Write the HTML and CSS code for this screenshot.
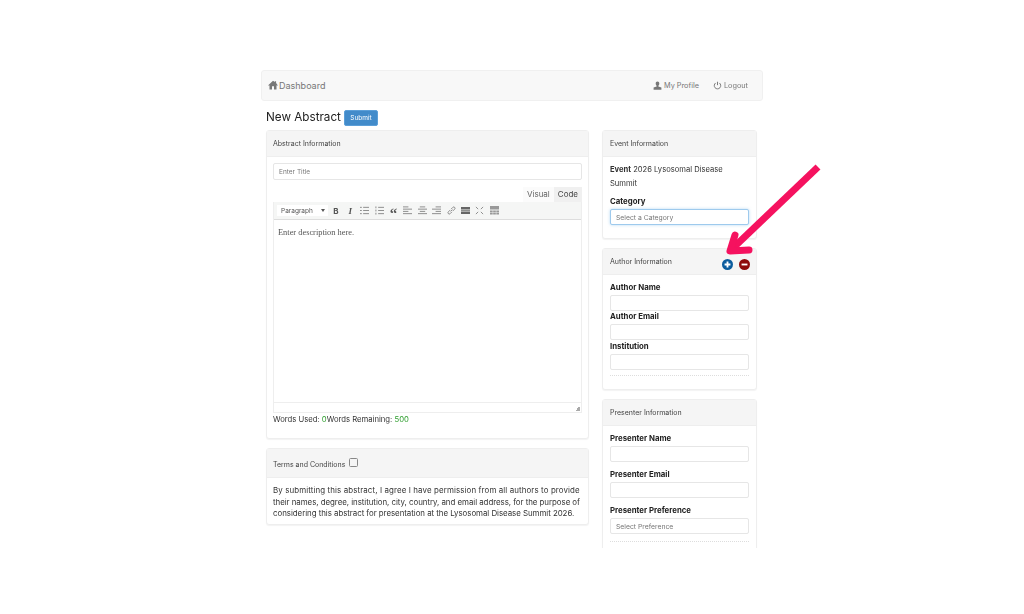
FILE: index.html
```html
<!DOCTYPE html>
<html lang="en">
<head>
  <meta charset="UTF-8" />
  <title>New Abstract</title>
  <link rel="stylesheet" href="styles.css">
</head>
<body>
  <div class="container">
    <nav class="navbar">
      <a class="nav-link nav-brand">
        <svg class="nav-icon" viewBox="0 0 12 12"><path d="M6 1 .3 6.300l.7.7.8-.7V11.500h3V7.600h2.400v3.900h3V6.300l.8.7.7-.7L9.700 3.700V1.500H8.200v.9z"/></svg>
        Dashboard
      </a>
      <div class="nav-right">
        <a class="nav-link">
          <svg class="nav-icon" viewBox="0 0 12 12"><path d="M6 .5C4.400.5 3.600 1.700 3.600 3.400c0 1.200.5 2.300 1.200 2.800v1L.8 8.800V11.500h10.400V8.800L7.200 7.200v-1c.7-.5 1.200-1.600 1.200-2.800C8.400 1.700 7.600.5 6 .5z"/></svg>
          My Profile
        </a>
        <a class="nav-link">
          <svg class="nav-icon" viewBox="0 0 12 12"><path class="line" d="M3.600 2.600a4.300 4.300 0 1 0 4.800 0M6 1v4.500"/></svg>
          Logout
        </a>
      </div>
    </nav>

    <div class="page-title">
      <h1>New Abstract</h1>
      <button class="btn-submit">Submit</button>
    </div>

    <div class="columns">
      <div class="col-left">
        <section class="panel">
          <div class="panel-head">Abstract Information</div>
          <div class="panel-body">
            <div class="input input-title">Enter Title</div>
            <div class="editor-tabs">
              <span class="tab tab-active">Visual</span>
              <span class="tab">Code</span>
            </div>
            <div class="editor">
              <div class="toolbar">
                <div class="format-select">Paragraph <span class="caret"></span></div>
                <span class="tool tool-b">B</span>
                <span class="tool tool-i">I</span>
                <svg class="tool-svg" viewBox="0 0 10 10"><path class="line" d="M3.500 1.500H10M3.500 5H10M3.500 8.500H10M0 1.500h2M0 5h2M0 8.500h2"/></svg>
                <svg class="tool-svg" viewBox="0 0 10 10"><path class="line" d="M3.500 1.500H10M3.500 5H10M3.500 8.500H10M1 .5v2M1 4v2M1 7.500v2"/></svg>
                <span class="tool tool-q">“</span>
                <svg class="tool-svg" viewBox="0 0 10 10"><path class="line" d="M0 1h6M0 3.500h10M0 6h6M0 8.500h10"/></svg>
                <svg class="tool-svg" viewBox="0 0 10 10"><path class="line" d="M2 1h6M0 3.500h10M2 6h6M0 8.500h10"/></svg>
                <svg class="tool-svg" viewBox="0 0 10 10"><path class="line" d="M4 1h6M0 3.500h10M4 6h6M0 8.500h10"/></svg>
                <svg class="tool-svg" viewBox="0 0 10 10"><path class="line" d="M4 6 6 4M3.500 4.500 1.500 6.500a1.400 1.400 0 0 0 2 2l2-2M6.500 5.500l2-2a1.400 1.400 0 0 0-2-2l-2 2"/></svg>
                <svg class="tool-svg" viewBox="0 0 10 10"><path d="M0 1h10v3H0zM0 6h10v3H0z"/><path class="line" d="M0 5h10"/></svg>
                <svg class="tool-svg" viewBox="0 0 10 10"><path class="line" d="M3.500 3.500 1 1M6.500 3.500 9 1M3.500 6.500 1 9M6.500 6.500 9 9"/></svg>
                <svg class="tool-svg tool-table" viewBox="0 0 10 10"><path d="M0 0h10v4H0zM0 5h3v2H0zM3.500 5h3v2h-3zM7 5h3v2H7zM0 7.500h3v2H0zM3.500 7.500h3v2h-3zM7 7.500h3v2H7z"/></svg>
              </div>
              <div class="editor-area">Enter description here.</div>
              <div class="statusbar"><span class="grip"></span></div>
            </div>
            <p class="word-count">Words Used: <span class="green">0</span>Words Remaining: <span class="green">500</span></p>
          </div>
        </section>

        <section class="panel panel-terms">
          <div class="panel-head">
            Terms and Conditions
            <span class="checkbox"></span>
          </div>
          <div class="panel-body">
            <span class="terms-first">By submitting this abstract, I agree I have permission from all authors to provide</span><br>
            their names, degree, institution, city, country, and email address, for the purpose of<br>
            considering this abstract for presentation at the Lysosomal Disease Summit 2026.
          </div>
        </section>
      </div>

      <div class="col-right">
        <section class="panel panel-event">
          <div class="panel-head">Event Information</div>
          <div class="panel-body">
            <p class="event-name"><strong>Event</strong> 2026 Lysosomal Disease Summit</p>
            <label class="field-label">Category</label>
            <div class="input input-focus">Select a Category</div>
          </div>
        </section>

        <section class="panel panel-author">
          <div class="panel-head head-actions">
            Author Information
            <span class="actions">
              <svg class="round-icon" viewBox="0 0 12 12"><circle cx="6" cy="6" r="6" fill="#0b5c9e"/><path d="M2.800 6h6.400M6 2.800v6.400" stroke="#fff" stroke-width="2"/></svg>
              <svg class="round-icon" viewBox="0 0 12 12"><circle cx="6" cy="6" r="6" fill="#8e0b0b"/><path d="M2.800 6h6.400" stroke="#fff" stroke-width="2"/></svg>
            </span>
          </div>
          <div class="panel-body">
            <label class="field-label">Author Name</label>
            <div class="input"></div>
            <label class="field-label">Author Email</label>
            <div class="input"></div>
            <label class="field-label">Institution</label>
            <div class="input"></div>
            <div class="dotted"></div>
          </div>
        </section>

        <section class="panel panel-presenter">
          <div class="panel-head">Presenter Information</div>
          <div class="panel-body">
            <label class="field-label">Presenter Name</label>
            <div class="input"></div>
            <label class="field-label">Presenter Email</label>
            <div class="input"></div>
            <label class="field-label">Presenter Preference</label>
            <div class="input">Select Preference</div>
            <div class="dotted"></div>
          </div>
        </section>
      </div>
    </div>
  </div>

  <!-- annotation arrow over the screenshot -->
  <svg class="arrow" viewBox="0 0 110 100">
    <path d="M98 7 12 89" stroke="#f5125f" stroke-width="7" fill="none"/>
    <path d="M15 75 10 91 29 90" stroke="#f5125f" stroke-width="7" stroke-linecap="round" stroke-linejoin="round" fill="none"/>
  </svg>
</body>
</html>
```

FILE: styles.css
```css
* {
  box-sizing: border-box;
}

body {
  font-family: 'Inter', 'Open Sans', sans-serif;
  background: #fff;
  color: #333;
  margin: 0;
  height: 614px;
  overflow: hidden;
  position: relative;
  font-size: 8px;
}

.container {
  width: 502px;
  height: 548px;
  margin: 0 auto;
  padding-top: 70px;
  overflow: hidden;
  filter: blur(0.3px);
}

.navbar {
  height: 31px;
  background: #f8f8f8;
  border: 1px solid #f0f0f0;
  border-radius: 3px;
  display: flex;
  align-items: center;
  justify-content: space-between;
  padding: 0 14px 1px 6px;
}

.nav-right {
  display: flex;
  gap: 14px;
}

.nav-link {
  display: flex;
  align-items: center;
  gap: 2px;
  color: #777;
  font-size: 7.300px;
}

.nav-brand {
  font-size: 9px;
  gap: 1px;
}

.nav-icon {
  width: 9px;
  height: 9px;
  fill: #777;
}

.nav-brand .nav-icon {
  width: 10px;
  height: 10px;
}

.nav-icon .line {
  fill: none;
  stroke: #777;
  stroke-width: 1.300;
}

.page-title {
  display: flex;
  align-items: center;
  gap: 3px;
  height: 29px;
  padding: 4px 0 0 5px;
}

h1 {
  font-size: 11.700px;
  font-weight: 400;
  color: #222;
  margin: -2px 0 0;
}

.btn-submit {
  background: #428bca;
  border: 1px solid #5c9fd8;
  color: #fff;
  font: inherit;
  font-size: 6.500px;
  height: 16px;
  width: 34px;
  padding: 0;
  border-radius: 2px;
}

.columns {
  display: flex;
  gap: 13px;
  padding: 0 5px;
}

.col-left {
  width: 323px;
}

.col-right {
  width: 155px;
}

.panel {
  background: #fff;
  border: 1px solid #eee;
  border-radius: 3px;
  box-shadow: 0 1px 1px rgba(0, 0, 0, 0.05);
  margin-bottom: 9px;
}

.panel-head {
  background: #f5f5f5;
  border-bottom: 1px solid #eee;
  height: 26px;
  padding: 0 6px;
  display: flex;
  align-items: center;
  font-size: 7px;
  color: #444;
}

.panel-body {
  padding: 6px;
}

.col-right .panel-head {
  padding: 0 7px;
}

.input {
  height: 16px;
  border: 1px solid #e6e6e6;
  border-radius: 2px;
  padding: 0 5px;
  display: flex;
  align-items: center;
  font-size: 6.800px;
  color: #777;
  background: #fff;
}

.input-title {
  height: 17px;
  font-size: 6.500px;
}

.input-focus {
  border-color: #9ecaed;
  box-shadow: 0 0 3px rgba(102, 175, 233, 0.5);
}

.editor-tabs {
  display: flex;
  justify-content: flex-end;
  height: 15px;
  margin-top: 7px;
}

.tab {
  padding: 0 4px;
  line-height: 14px;
  font-size: 8px;
  background: #f0f0f0;
  color: #444;
}

.tab-active {
  background: #fbfbfb;
  color: #666;
}

.editor {
  border: 1px solid #eee;
  border-top: 0;
}

.toolbar {
  height: 18px;
  background: #f5f6f5;
  border-bottom: 1px solid #ddd;
  display: flex;
  align-items: center;
  padding-left: 3px;
  gap: 5.400px;
}

.format-select {
  width: 51px;
  height: 11px;
  background: #fff;
  color: #555;
  font-size: 6.500px;
  display: flex;
  align-items: center;
  justify-content: space-between;
  padding: 0 3px 0 4px;
  margin-right: -2px;
}

.caret {
  border: 2px solid transparent;
  border-top: 3px solid #555;
  border-bottom: 0;
}

.tool {
  width: 9px;
  text-align: center;
  color: #555;
  font-size: 8px;
  font-weight: 700;
}

.tool-i {
  font-style: italic;
  font-family: 'Liberation Serif', serif;
  font-size: 9px;
}

.tool-q {
  font-family: 'Liberation Serif', serif;
  font-size: 15px;
  line-height: 15px;
  height: 10px;
}

.tool-svg {
  width: 9px;
  height: 9px;
  fill: #666;
}

.tool-table {
  fill: #999;
}

.tool-svg .line {
  fill: none;
  stroke: #777;
  stroke-width: 0.900;
}

.editor-area {
  height: 182px;
  padding: 8px 4px;
  font-family: 'Liberation Serif', serif;
  font-size: 8.400px;
  color: #555;
}

.statusbar {
  height: 10px;
  border-top: 1px solid #eee;
  position: relative;
}

.grip {
  position: absolute;
  right: 1px;
  bottom: 1px;
  width: 5px;
  height: 5px;
  background: linear-gradient(135deg, transparent 50%, #aaa 50%);
}

.word-count {
  margin: 0;
  padding: 2px 0 7px;
  font-size: 7.700px;
  line-height: 10px;
}

.green {
  color: #2e9e2e;
}

.panel-terms .panel-head {
  height: 29px;
  padding-top: 3px;
}

.panel-terms .panel-body {
  line-height: 11.500px;
  padding: 7px 6px 4px;
  font-size: 7.900px;
  letter-spacing: -0.040px;
  white-space: nowrap;
}

.terms-first {
  letter-spacing: 0.120px;
}

.checkbox {
  width: 9px;
  height: 9px;
  border: 1px solid #888;
  border-radius: 1.500px;
  margin: -5px 0 0 4px;
}

.event-name {
  margin: 0 0 5px;
  line-height: 14px;
  font-size: 7.600px;
}

.field-label {
  display: block;
  font-weight: 700;
  font-size: 7.800px;
  line-height: 10px;
  margin-bottom: 3px;
  color: #222;
}

.col-right .panel-body {
  padding-left: 7px;
  padding-right: 7px;
}

.panel-event .panel-body {
  padding-top: 6px;
  padding-bottom: 12.500px;
}

.head-actions {
  justify-content: space-between;
}

.col-right .head-actions {
  padding-right: 6px;
}

.actions {
  display: flex;
  gap: 6px;
  margin-top: 6px;
}

.round-icon {
  width: 11px;
  height: 11px;
}

.panel-author .panel-body,
.panel-presenter .panel-body {
  padding-top: 7px;
}

.panel-author .input {
  margin-bottom: 0.500px;
}

.panel-presenter .input {
  margin-bottom: 7.300px;
}

.dotted {
  border-top: 1px dotted #ddd;
  margin-top: 5px;
  height: 8px;
}

.arrow {
  position: absolute;
  left: 720px;
  top: 160px;
  width: 110px;
  height: 100px;
}
```
